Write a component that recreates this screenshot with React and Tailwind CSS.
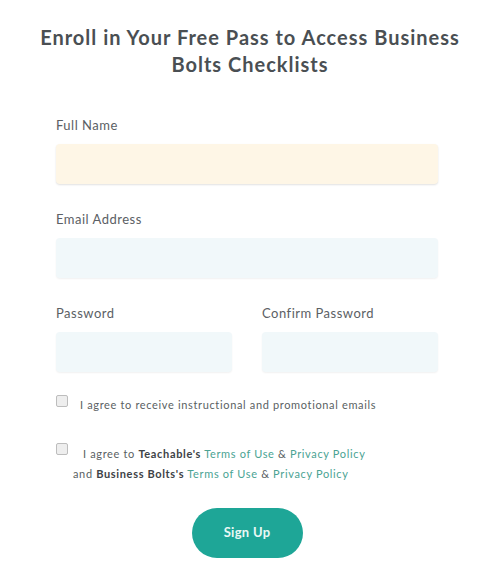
export default function App() {
  const font = { fontFamily: "Lato, 'Open Sans', sans-serif" };
  return (
    <div className="w-[500px] h-[586px] bg-white" style={font}>
      <h1 className="pt-[24px] text-center text-[20px] leading-[27px] font-bold text-[#4a4f53] tracking-[1px]">
        Enroll in Your Free Pass to Access Business
        <br />
        Bolts Checklists
      </h1>

      <form className="px-[56px] mt-[38px] w-[494px]">
        <label className="block text-[13px] leading-[18px] text-[#5b6064] tracking-[0.5px] mb-[10px]">
          Full Name
        </label>
        <div className="h-[40px] rounded-[4px] bg-[#fef6e6] shadow-[0_1px_2px_rgba(0,0,0,0.12)]"></div>

        <label className="block mt-[26px] text-[13px] leading-[18px] text-[#5b6064] tracking-[0.5px] mb-[10px]">
          Email Address
        </label>
        <div className="h-[40px] rounded-[4px] bg-[#f1f8fa] shadow-[0_1px_2px_rgba(0,0,0,0.06)]"></div>

        <div className="mt-[26px] grid grid-cols-2 gap-[30px]">
          <div>
            <label className="block text-[13px] leading-[18px] text-[#5b6064] tracking-[0.5px] mb-[10px]">
              Password
            </label>
            <div className="h-[40px] rounded-[4px] bg-[#f1f8fa] shadow-[0_1px_2px_rgba(0,0,0,0.06)]"></div>
          </div>
          <div>
            <label className="block text-[13px] leading-[18px] text-[#5b6064] tracking-[0.5px] mb-[10px]">
              Confirm Password
            </label>
            <div className="h-[40px] rounded-[4px] bg-[#f1f8fa] shadow-[0_1px_2px_rgba(0,0,0,0.06)]"></div>
          </div>
        </div>

        <div className="mt-[23px] flex items-start text-[11px] leading-[20px] text-[#5a5f63] tracking-[0.65px]">
          <span className="w-[12px] h-[12px] border border-[#bdbdbd] bg-[#eeeeee] rounded-[2px] shrink-0"></span>
          <span className="ml-[12px] -mt-[5px] pt-[5px]">
            I agree to receive instructional and promotional emails
          </span>
        </div>

        <div className="mt-[28px] flex items-start text-[11px] leading-[20px] text-[#5a5f63] tracking-[0.65px]">
          <span className="w-[12px] h-[12px] border border-[#bdbdbd] bg-[#eeeeee] rounded-[2px] shrink-0"></span>
          <div className="-ml-[12px] mt-[1px]">
            <div className="pl-[27px]">
              I agree to <b className="font-bold text-[#3d4246]">Teachable's</b>{" "}
              <span className="text-[#4aa393]">Terms of Use</span> &amp;{" "}
              <span className="text-[#4aa393]">Privacy Policy</span>
            </div>
            <div className="pl-[17px]">
              and <b className="font-bold text-[#3d4246]">Business Bolts's</b>{" "}
              <span className="text-[#4aa393]">Terms of Use</span> &amp;{" "}
              <span className="text-[#4aa393]">Privacy Policy</span>
            </div>
          </div>
        </div>
      </form>

      <div className="mt-[24px] flex justify-center pr-[6px]">
        <button className="w-[111px] h-[50px] rounded-full bg-[#1ea697] text-[#eaf8f5] text-[13px] font-bold tracking-[0.3px]">
          Sign Up
        </button>
      </div>
    </div>
  );
}
